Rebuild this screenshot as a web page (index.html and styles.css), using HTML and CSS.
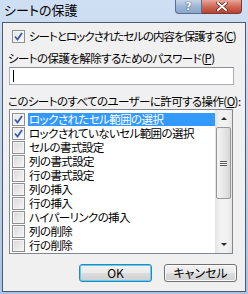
FILE: index.html
```html
<!DOCTYPE html>
<html>
<head>
  <meta charset="UTF-8">
  <title>シートの保護</title>
  <link rel="stylesheet" href="styles.css">
</head>
<body>
  <div class="window">
    <div class="titlebar">
      <span class="title">シートの保護</span>
      <div class="caption">
        <span class="cap help">?</span>
        <span class="cap close">
          <svg width="12" height="9" viewBox="0 0 12 9">
            <path d="M2 1 L10 8 M10 1 L2 8" stroke="#5a1f18" stroke-width="3.4" stroke-linecap="round"/>
            <path d="M2 1 L10 8 M10 1 L2 8" stroke="#fff" stroke-width="2" stroke-linecap="round"/>
          </svg>
        </span>
      </div>
    </div>

    <div class="client">
      <label class="check-row">
        <span class="box checked"><svg width="9" height="9" viewBox="0 0 9 9"><path d="M1 4.5 L3.5 7.5 L8 1" fill="none" stroke="#3a5ba6" stroke-width="1.8"/></svg></span>
        <span class="text">シートとロックされたセルの内容を保護する(<u>C</u>)</span>
      </label>

      <div class="label first">シートの保護を解除するためのパスワード(<u>P</u>)</div>
      <div class="input"><span class="caret"></span></div>

      <div class="label second">このシートのすべてのユーザーに許可する操作(<u>O</u>):</div>
      <div class="listbox">
        <ul class="items">
          <li class="selected"><span class="box checked"><svg width="9" height="9" viewBox="0 0 9 9"><path d="M1 4.5 L3.5 7.5 L8 1" fill="none" stroke="#3a5ba6" stroke-width="1.8"/></svg></span><span class="text">ロックされたセル範囲の選択</span></li>
          <li><span class="box checked"><svg width="9" height="9" viewBox="0 0 9 9"><path d="M1 4.5 L3.5 7.5 L8 1" fill="none" stroke="#3a5ba6" stroke-width="1.8"/></svg></span><span class="text">ロックされていないセル範囲の選択</span></li>
          <li><span class="box"></span><span class="text">セルの書式設定</span></li>
          <li><span class="box"></span><span class="text">列の書式設定</span></li>
          <li><span class="box"></span><span class="text">行の書式設定</span></li>
          <li><span class="box"></span><span class="text">列の挿入</span></li>
          <li><span class="box"></span><span class="text">行の挿入</span></li>
          <li><span class="box"></span><span class="text">ハイパーリンクの挿入</span></li>
          <li><span class="box"></span><span class="text">列の削除</span></li>
          <li><span class="box"></span><span class="text">行の削除</span></li>
        </ul>
        <div class="scrollbar">
          <span class="arrow up"></span>
          <div class="track">
            <div class="thumb"><span class="grip"></span></div>
          </div>
          <span class="arrow down"></span>
        </div>
      </div>

      <div class="buttons">
        <button class="btn default">OK</button>
        <button class="btn">キャンセル</button>
      </div>
    </div>
  </div>
</body>
</html>
```

FILE: styles.css
```css
body {
  margin: 0;
  font-family: "Noto Sans CJK JP", sans-serif;
  font-size: 11.5px;
  letter-spacing: -0.6px;
  font-feature-settings: "palt";
  color: #000;
}

.window {
  width: 248px;
  height: 294px;
  box-sizing: border-box;
  padding: 0 2px 2px 2px;
  background: linear-gradient(#cfdff3, #a9c4e6);
  display: flex;
  flex-direction: column;
  overflow: hidden;
}

/* title bar */
.titlebar {
  height: 22px;
  flex-shrink: 0;
  display: flex;
  justify-content: space-between;
  align-items: flex-start;
}
.title {
  font-size: 13px;
  letter-spacing: 0;
  line-height: 20px;
  padding-left: 2px;
  color: #000;
}
.caption {
  display: flex;
  margin-right: 4px;
}
.cap {
  height: 13px;
  display: flex;
  align-items: center;
  justify-content: center;
  border: 1px solid #5b6e8c;
  border-top: none;
}
.help {
  width: 25px;
  border-radius: 0 0 0 4px;
  background: linear-gradient(#c6d6ea, #9eb6d6 50%, #8ba6cb);
  color: #fff;
  font-family: "DejaVu Sans", sans-serif;
  font-weight: bold;
  font-size: 11px;
  letter-spacing: 0;
  text-shadow: 0 0 1px #2c3e5c, 0 0 1px #2c3e5c;
}
.close {
  width: 39px;
  border-left: none;
  border-color: #7a3a30;
  border-radius: 0 0 4px 0;
  background: linear-gradient(#e6a89c, #d06a58 50%, #b8402f);
}

/* client area */
.client {
  flex: 1;
  min-height: 0;
  background: #f0f0f0;
  border: 1px solid #4d5a6e;
  padding: 6px 6px 0 5px;
  display: flex;
  flex-direction: column;
}

.check-row {
  display: flex;
  align-items: center;
  gap: 4px;
  line-height: 14px;
  padding-left: 4px;
  white-space: nowrap;
}
.check-row .text {
  letter-spacing: -1px;
}

.box {
  width: 11px;
  height: 11px;
  border: 1px solid #8e8f8f;
  background: linear-gradient(135deg, #d8d8d8, #f7f7f7);
  box-shadow: inset 0 0 0 1px #f4f4f4;
  display: flex;
  align-items: center;
  justify-content: center;
  flex-shrink: 0;
}
.box.checked {
  background: linear-gradient(135deg, #e4e6ea, #fafafa);
}

.label {
  line-height: 14px;
  white-space: nowrap;
}
.label.first {
  margin-top: 8px;
}
.label.second {
  margin-top: 9px;
}

.input {
  margin: 2px 5px 0 1px;
  height: 16px;
  flex-shrink: 0;
  border: 1px solid #abadb3;
  border-top-color: #8b8e96;
  background: #fff;
  display: flex;
  align-items: center;
}
.caret {
  width: 1px;
  height: 12px;
  margin-left: 3px;
  background: #000;
}

/* list */
.listbox {
  margin: 1px 6px 0 1px;
  height: 143px;
  flex-shrink: 0;
  border: 1px solid #828790;
  background: #fff;
  display: flex;
}
.items {
  list-style: none;
  margin: 0;
  padding: 2px 0 0 2px;
  flex: 1;
}
.items li {
  height: 14px;
  display: flex;
  align-items: center;
  gap: 3px;
  white-space: nowrap;
}
.items .text {
  flex: 1;
  line-height: 13px;
  padding-left: 1px;
}
.items li.selected .text {
  background: #3399ff;
  color: #fff;
}

.scrollbar {
  width: 17px;
  background: linear-gradient(90deg, #e4e4e4, #f2f2f2 30%, #f2f2f2 70%, #e6e6e6);
  display: flex;
  flex-direction: column;
  align-items: center;
}
.arrow {
  height: 17px;
  width: 17px;
  display: flex;
  align-items: center;
  justify-content: center;
}
.arrow::after {
  content: "";
  border-left: 3px solid transparent;
  border-right: 3px solid transparent;
}
.arrow.up::after {
  border-bottom: 3px solid #2a2a2a;
}
.arrow.down::after {
  border-top: 3px solid #2a2a2a;
}
.track {
  flex: 1;
  width: 100%;
  display: flex;
  justify-content: center;
}
.thumb {
  width: 13px;
  height: 70px;
  border: 1px solid #979797;
  border-radius: 2px;
  background: linear-gradient(90deg, #f3f3f3, #e8e8e8 50%, #d6d6d6);
  display: flex;
  align-items: center;
  justify-content: center;
}
.grip {
  width: 7px;
  height: 5px;
  border-top: 1px solid #555;
  border-bottom: 1px solid #555;
  background: linear-gradient(#fff 0, #fff 1px, #555 1px, #555 2px, #fff 2px, #fff 3px, #555 3px, #555 4px, transparent 4px);
  box-sizing: border-box;
}

/* buttons */
.buttons {
  display: flex;
  justify-content: flex-end;
  gap: 12px;
  margin-top: 10px;
  margin-right: 2px;
}
.btn {
  width: 73px;
  height: 18px;
  padding: 0;
  font-family: inherit;
  font-size: 12px;
  letter-spacing: 0;
  font-feature-settings: "palt";
  line-height: 16px;
  border: 1px solid #707070;
  border-radius: 3px;
  background: linear-gradient(#f2f2f2, #ebebeb 50%, #dddddd 50%, #cfcfcf);
  box-shadow: inset 0 0 0 1px #fcfcfc;
  color: #000;
}
.btn.default {
  border-color: #3c7fb1;
  box-shadow: inset 0 0 0 1px #48d8fb;
}
```
